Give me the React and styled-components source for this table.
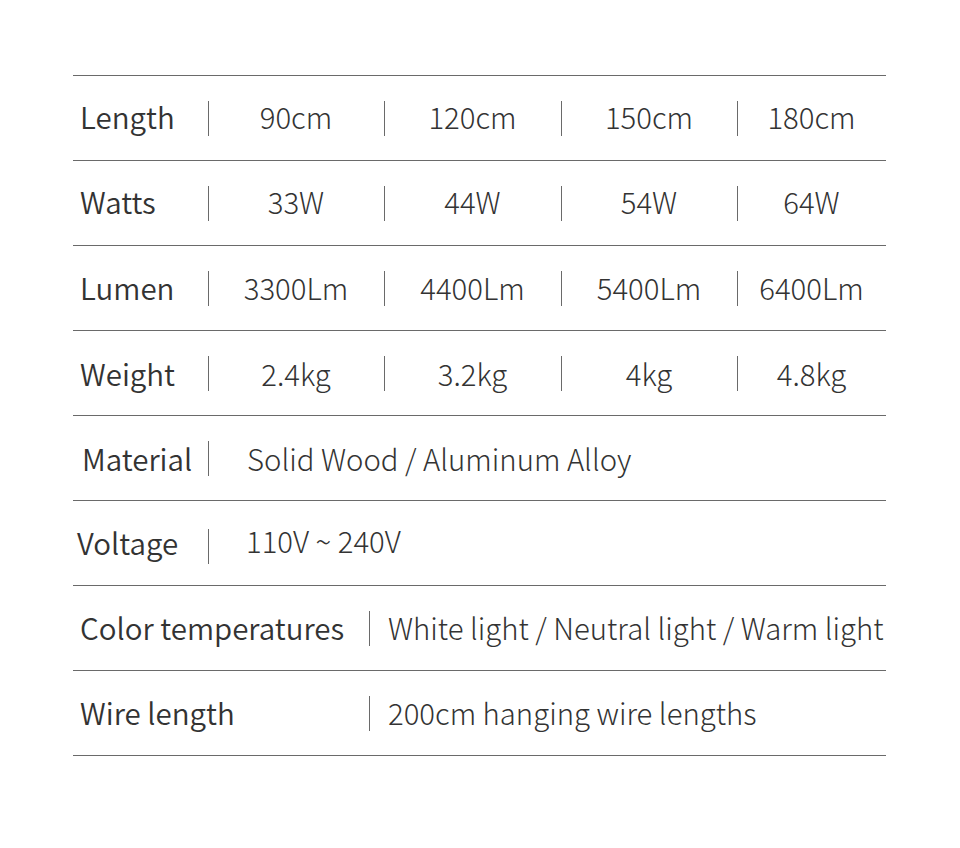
import React from 'react';
import styled, { createGlobalStyle } from 'styled-components';

const Global = createGlobalStyle`
  body {
    margin: 0;
    background: #ffffff;
  }
`;

const Page = styled.div`
  width: 960px;
  height: 848px;
  padding: 75px 0 0 73px;
  box-sizing: border-box;
  font-family: "Noto Sans CJK SC", "Noto Sans", sans-serif;
  font-weight: 300;
  color: #333333;
`;

const Table = styled.div`
  width: 813px;
  border-top: 1px solid #6a6a6a;
`;

const Row = styled.div`
  display: flex;
  align-items: center;
  height: 85px;
  box-sizing: border-box;
  padding-bottom: ${({ $lift }) => ($lift || 0) * 2}px;
  border-bottom: 1px solid #6a6a6a;
`;

const Label = styled.div`
  width: ${({ $w }) => $w}px;
  flex: none;
  box-sizing: border-box;
  padding-left: ${({ $pl }) => $pl ?? 7}px;
  font-size: 29.5px;
  font-weight: 350;
  color: #333333;
  white-space: nowrap;
`;

const Cell = styled.div`
  position: relative;
  width: ${({ $w }) => ($w ? `${$w}px` : 'auto')};
  flex: ${({ $w }) => ($w ? 'none' : '1')};
  box-sizing: border-box;
  text-align: ${({ $left }) => ($left ? 'left' : 'center')};
  padding-left: ${({ $pad }) => $pad || 0}px;
  font-size: 29.3px;
  white-space: nowrap;
  margin-top: ${({ $shift }) => $shift || 0}px;

  &::before {
    content: '';
    position: absolute;
    left: 0;
    top: 50%;
    margin-top: ${({ $shift, $lift }) => -17 - ($shift || 0) + ($lift || 0)}px;
    width: 1px;
    height: 35px;
    background: #6a6a6a;
  }
`;

const widths = [176, 177, 176, 149];

const multi = [
  ['Length', ['90cm', '120cm', '150cm', '180cm'], 2],
  ['Watts', ['33W', '44W', '54W', '64W'], 2],
  ['Lumen', ['3300Lm', '4400Lm', '5400Lm', '6400Lm'], 1],
  ['Weight', ['2.4kg', '3.2kg', '4kg', '4.8kg'], 0],
];

const single = [
  ['Material', 'Solid Wood / Aluminum Alloy', 135, 39, 0, 0, 9],
  ['Voltage', '110V ~ 240V', 135, 38, -5, 1, 4],
  ['Color temperatures', 'White light / Neutral light / Warm light', 296, 19, 0, 1, 7],
  ['Wire length', '200cm hanging wire lengths', 296, 19, 0, 1, 7],
];

export default function App() {
  return (
    <Page>
      <Global />
      <Table>
        {multi.map(([name, vals, lift]) => (
          <Row key={name} $lift={lift}>
            <Label $w={135}>{name}</Label>
            {vals.map((v, i) => (
              <Cell key={v} $w={widths[i]} $lift={lift}>{v}</Cell>
            ))}
          </Row>
        ))}
        {single.map(([name, val, w, pad, shift, lift, pl]) => (
          <Row key={name} $lift={lift}>
            <Label $w={w} $pl={pl}>{name}</Label>
            <Cell $left $pad={pad} $shift={shift} $lift={lift}>{val}</Cell>
          </Row>
        ))}
      </Table>
    </Page>
  );
}
